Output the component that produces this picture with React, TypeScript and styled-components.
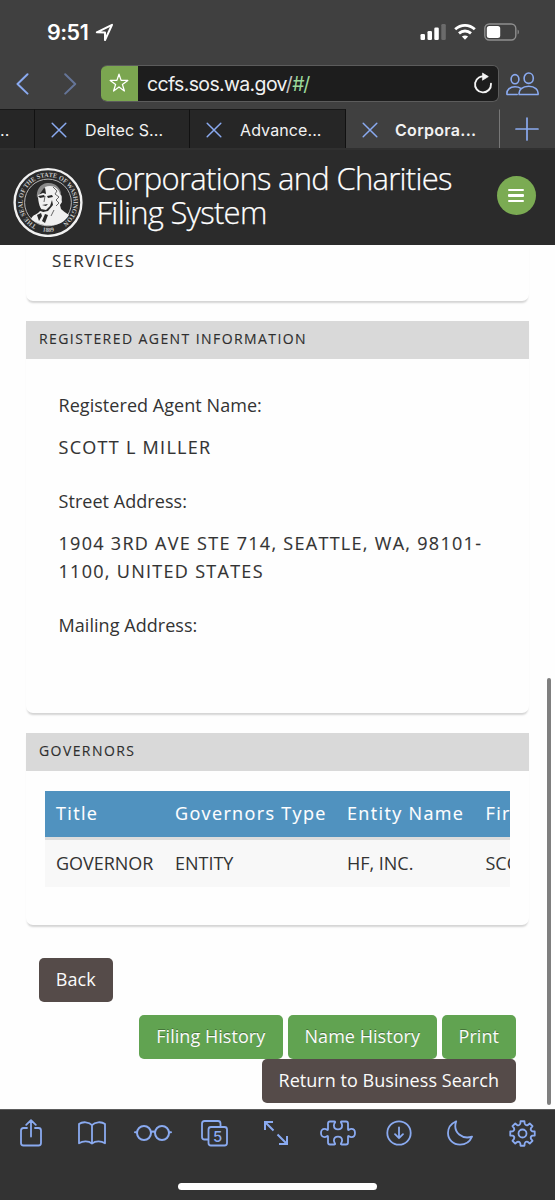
import React from 'react';
import styled, { createGlobalStyle } from 'styled-components';

const BLUE = '#8aaaf0';

const GlobalStyle = createGlobalStyle`
  *, *::before, *::after { box-sizing: border-box; }
  html, body { margin: 0; padding: 0; background: #fff; }
  body { font-family: 'Open Sans', 'Noto Sans', sans-serif; color: #333; overflow: hidden; }
`;

const Screen = styled.div`
  position: relative;
  width: 555px;
  height: 1200px;
  display: flex;
  flex-direction: column;
  overflow: hidden;
  background: #fefefe;
`;

/* ---------- browser chrome ---------- */

const StatusBar = styled.div`
  height: 64px;
  flex: none;
  display: flex;
  align-items: center;
  justify-content: space-between;
  padding: 0 35px 0 47px;
  background: #404040;
  color: #fff;
`;

const Clock = styled.div`
  display: flex;
  align-items: center;
  gap: 7px;
  font: 600 21.5px/26px Inter, sans-serif;
  letter-spacing: -0.5px;
`;

const StatusIcons = styled.div`
  display: flex;
  align-items: center;
  gap: 8px;
`;

const NavBar = styled.div`
  height: 45px;
  flex: none;
  display: flex;
  align-items: flex-start;
  background: #404040;
`;

const NavArrow = styled.div<{ $dim?: boolean; $pad: number }>`
  padding: 9px 0 0 ${p => p.$pad}px;
  width: ${p => (p.$dim ? 54 : 47)}px;
  flex: none;
  height: 36px;
  opacity: ${p => (p.$dim ? 0.5 : 1)};
  svg { display: block; }
`;

const AddressBar = styled.div`
  width: 398px;
  flex: none;
  height: 37px;
  margin-top: 0.5px;
  display: flex;
  align-items: center;
  border: 1px solid #5c5c5c;
  border-left: 0;
  border-radius: 6px;
  background: #1d1d1d;
  overflow: hidden;
`;

const Favorite = styled.div`
  width: 36.5px;
  height: 37px;
  display: flex;
  align-items: center;
  justify-content: center;
  background: #7ba650;
`;

const Url = styled.div`
  flex: 1;
  padding: 1px 0 0 9.5px;
  font: 400 19.5px/34px Inter, sans-serif;
  letter-spacing: -0.65px;
  color: #f1f1f1;
  span { color: #9bd89b; letter-spacing: -1.3px; }
  b { font-weight: 400; color: #c4c4c4; }
`;

const Reload = styled.div`
  padding-right: 4px;
  svg { display: block; }
`;

const People = styled.div`
  padding: 7.5px 0 0 7px;
  svg { display: block; }
`;

const Tabs = styled.div`
  height: 41px;
  flex: none;
  display: flex;
  background: #404040;
  border-bottom: 2px solid #303030;
`;

const Tab = styled.div<{ $w: number; $active?: boolean }>`
  width: ${p => p.$w}px;
  display: flex;
  align-items: center;
  padding: 1px 0 0 16px;
  gap: ${p => (p.$active ? 17 : 18)}px;
  border-top: 1px solid ${p => (p.$active ? '#404040' : '#181818')};
  border-right: 1px solid ${p => (p.$active ? '#777' : '#111')};
  background: ${p => (p.$active ? '#404040' : '#262626')};
  color: #f2f2f2;
  font: ${p => (p.$active ? 600 : 400)} 16px/20px Inter, sans-serif;
  letter-spacing: ${p => (p.$active ? 0.3 : 0.1)}px;
  white-space: nowrap;
`;

const CutTab = styled(Tab)`
  padding-left: 0;
`;

const NewTab = styled.div`
  flex: 1;
  display: flex;
  align-items: center;
  justify-content: center;
  padding: 1px 2px 0 0;
`;

/* ---------- site ---------- */

const SiteHeader = styled.header`
  height: 95px;
  flex: none;
  display: flex;
  align-items: flex-start;
  background: #2b2b2b;
  padding: 0 19.5px 0 12px;
`;

const SealBox = styled.div`
  padding-top: 15px;
  width: 84px;
  svg { display: block; }
`;

const SiteTitle = styled.h1`
  flex: 1;
  margin: 0;
  padding: 11px 0 0 0.5px;
  color: #fff;
  font-weight: 300;
  font-size: 31px;
  line-height: 34px;
  letter-spacing: -0.72px;
  -webkit-text-stroke: 0.25px #fff;
  white-space: nowrap;
`;

const MenuButton = styled.button`
  margin: 26px 0 0;
  padding: 0;
  width: 39px;
  height: 39px;
  border: 0;
  border-radius: 50%;
  background: #7bab53;
  display: flex;
  flex-direction: column;
  align-items: center;
  justify-content: center;
  gap: 2.7px;
`;

const MenuLine = styled.i`
  width: 16px;
  height: 2.7px;
  border-radius: 1px;
  background: #fff;
`;

const Page = styled.main`
  flex: 1;
  min-height: 0;
  padding: 0 26px;
`;

const Panel = styled.section<{ $h: number }>`
  height: ${p => p.$h}px;
  margin-bottom: 20px;
  border-radius: 0 0 7px 7px;
  background: #fefefe;
  box-shadow: 0 2.5px 2px -1px rgba(0, 0, 0, 0.17);
`;

const PanelTitle = styled.h2`
  margin: 0;
  height: 38px;
  padding-left: 13px;
  background: #d9d9d9;
  color: #2e2e2e;
  font-size: 14px;
  font-weight: 400;
  line-height: 35px;
  letter-spacing: 1.42px;
  -webkit-text-stroke: 0.12px #2e2e2e;
`;

const Continued = styled.div`
  padding: 2px 0 0 26px;
  font-size: 17px;
  line-height: 28px;
  letter-spacing: 1.2px;
  -webkit-text-stroke: 0.1px #333;
`;

const Fields = styled.dl`
  margin: 0;
  padding: 32.5px 30px 0 32.5px;
`;

const Label = styled.dt`
  font-size: 18px;
  line-height: 29px;
  letter-spacing: 0.05px;
`;

const Value = styled.dd`
  margin: 0;
  padding: 13px 0 25.6px;
  font-size: 18px;
  line-height: 28.3px;
  letter-spacing: 1.29px;
  -webkit-text-stroke: 0.12px #333;
  white-space: nowrap;
`;

const TableScroll = styled.div`
  margin: 20px 19px 0 19px;
  overflow: hidden;
`;

const Grid = styled.div<{ $head?: boolean }>`
  width: 620px;
  display: grid;
  grid-template-columns: 119px 172px 138.5px 1fr;
  padding-left: 11px;
  height: ${p => (p.$head ? 49 : 46.5)}px;
  line-height: ${p => (p.$head ? 45 : 46)}px;
  border-bottom: ${p => (p.$head ? '3px solid #dcdcdc' : '0')};
  background: ${p => (p.$head ? '#5092bf' : '#f8f8f8')};
  color: ${p => (p.$head ? '#fff' : '#333')};
  font-size: 18px;
  letter-spacing: ${p => (p.$head ? 1.35 : -0.02)}px;
  -webkit-text-stroke: ${p => (p.$head ? '0.12px #fff' : '0')};
  white-space: nowrap;
`;

const BackRow = styled.div`
  padding: 13px 13px 13px;
  display: flex;
`;

const Actions = styled.div`
  display: flex;
  flex-wrap: wrap;
  justify-content: flex-end;
  column-gap: 5px;
  padding-right: 13px;
`;

const Button = styled.button<{ $green?: boolean; $w: number }>`
  width: ${p => p.$w}px;
  height: 44px;
  padding: 0 0.5px 1px 0;
  border: 0;
  border-radius: 5px;
  background: ${p => (p.$green ? '#61a351' : '#554b49')};
  color: #fbfbfb;
  font: 400 18px/42px 'Open Sans', sans-serif;
  letter-spacing: 0.04px;
  text-shadow: ${p => (p.$green ? '0 -1px 0 rgba(0,0,0,0.3)' : 'none')};
  white-space: nowrap;
`;

const ScrollThumb = styled.div`
  position: absolute;
  left: 547px;
  top: 678px;
  width: 4px;
  height: 427px;
  border-radius: 2px;
  background: #7f7f7f;
`;

const BottomBar = styled.nav`
  height: 91px;
  flex: none;
  border-top: 1px solid #5d5d5d;
  background: #333;
  display: flex;
  flex-direction: column;
  align-items: center;
`;

const Tools = styled.div`
  width: 100%;
  height: 46px;
  display: grid;
  grid-template-columns: 61px 61.5px 61.5px 61px 61px 64px 58px 63px 62px;
  justify-items: center;
  align-items: center;
  svg { display: block; }
`;

const HomeIndicator = styled.div`
  margin-top: 27px;
  width: 199px;
  height: 7px;
  border-radius: 4px;
  background: #fff;
`;

/* ---------- drawings ---------- */

const stroke = {
  fill: 'none',
  stroke: BLUE,
  strokeWidth: 1.8,
  strokeLinecap: 'round' as const,
  strokeLinejoin: 'round' as const,
};

const CloseIcon = () => (
  <svg width="16" height="16" viewBox="0 0 16 16" {...stroke} strokeWidth={1.5}>
    <path d="M1.2 1.2l13.6 13.6M14.8 1.2L1.2 14.8" />
  </svg>
);

const Seal = () => (
  <svg width="72" height="72" viewBox="0 0 72 72">
    <defs>
      <path id="ring" d="M24.5 60.3 A25.5 25.5 0 1 1 47.5 60.3" />
      <path id="ringBottom" d="M27.5 65.5 Q36 68.4 44.5 65.5" />
    </defs>
    <circle cx="36" cy="37.5" r="33.4" fill="#2b2b2b" stroke="#f1f1f1" strokeWidth="2.4" />
    <circle cx="36" cy="37.5" r="23.4" fill="#292929" stroke="#b5b5b5" strokeWidth="1" />
    <text fill="#c8c8c8" fontFamily="Liberation Serif, serif" fontWeight="700" fontSize="6.6">
      <textPath href="#ring" textLength="132" lengthAdjust="spacingAndGlyphs">THE SEAL OF THE STATE OF WASHINGTON</textPath>
    </text>
    <text fill="#c8c8c8" fontFamily="Liberation Serif, serif" fontWeight="700" fontSize="6">
      <textPath href="#ringBottom" startOffset="3">1889</textPath>
    </text>
    <path fill="#8a8a8a" d="M25 33C24 25 28 19 35 18C43 17 49 23 49 29L40 28L32 23Z" />
    <path fill="#f0f0f0" d="M26 30L31 28L34 29L33 22C40 19 47 23 48 29C51 31 49 34 50 37L48 40L49 44C52 47 56 49 57 50C53 57 46 60.5 37 60.5C30 60.5 24 58 19 54C21 49 25 50 28 46L32 47C28 44 26 38 26 30Z" />
    <path fill="#292929" d="M26 31l6-1 1 2-5 1zM35 31l5-1 1 2-5 1zM30 40l6-1-2 2zM40 35l1 5-5 6-5 1-2-3 5 1 4-4zM25 50l4-2 1 3-3 5zM33 49l3 1-3 8-3-2z" />
    <path fill="none" stroke="#666" strokeWidth="1" d="M41 22l4 4-2 3 4 3-3 3 3 3-3 3M33 31l-1 6M42 45l-3 6" />
  </svg>
);

const gearPath = (() => {
  const pts: string[] = [];
  for (let i = 0; i < 8; i++) {
    const a = (i * Math.PI) / 4;
    const at = (r: number, d: number) =>
      `${(13.5 + r * Math.sin(a + d)).toFixed(2)} ${(13.5 - r * Math.cos(a + d)).toFixed(2)}`;
    pts.push(`${i ? 'L' : 'M'}${at(12.4, -0.16)}L${at(12.4, 0.16)}L${at(10, 0.22)}Q${at(8.2, 0.39)} ${at(10, 0.565)}`);
  }
  return pts.join('') + 'Z';
})();

const App = () => (
  <Screen>
    <GlobalStyle />
    <StatusBar>
      <Clock>
        9:51
        <svg width="19" height="19" viewBox="0 0 19 19" fill="none" stroke="#fff" strokeWidth="2" strokeLinejoin="round">
          <path d="M1.8 9.3L17 1.8L10 17V9.4Z" />
        </svg>
      </Clock>
      <StatusIcons>
        <svg width="26" height="18" viewBox="0 0 26 18" fill="#fff">
          <rect x="0.5" y="11" width="4.5" height="6" rx="1.3" />
          <rect x="7.5" y="8" width="4.5" height="9" rx="1.3" />
          <rect x="14.3" y="4.5" width="4.5" height="12.5" rx="1.3" />
          <rect x="21.3" y="1" width="4.5" height="16" rx="1.3" fill="#6b6b6b" />
        </svg>
        <svg width="22" height="18" viewBox="0 0 22 18" fill="none" stroke="#fff" strokeWidth="2.8">
          <path d="M1.2 6.3C6.8 1 15.2 1 20.8 6.3" />
          <path d="M5 10.4C8.5 7.2 13.5 7.2 17 10.4" />
          <path d="M7.9 13.6C9.7 12 12.3 12 14.1 13.6L11 16.8Z" fill="#fff" stroke="none" />
        </svg>
        <svg width="36" height="18" viewBox="0 0 36 18">
          <rect x="0.8" y="1" width="31" height="16" rx="4.5" fill="none" stroke="#8e8e8e" strokeWidth="1.4" />
          <rect x="2.8" y="3" width="13.4" height="12" rx="2.5" fill="#fff" />
          <path d="M33.6 6.5a3 3 0 010 5z" fill="#8e8e8e" />
        </svg>
      </StatusIcons>
    </StatusBar>

    <NavBar>
      <NavArrow $pad={16}>
        <svg width="14" height="22" viewBox="0 0 14 22" {...stroke} strokeWidth={2}>
          <path d="M11.5 1.2L1.5 11L11.5 20.6" />
        </svg>
      </NavArrow>
      <NavArrow $pad={17} $dim>
        <svg width="14" height="22" viewBox="0 0 14 22" {...stroke} strokeWidth={2}>
          <path d="M1.2 1.2L11.2 11L1.2 20.6" />
        </svg>
      </NavArrow>
      <AddressBar>
        <Favorite>
          <svg width="20" height="20" viewBox="0 0 20 20" fill="none" stroke="#fff" strokeWidth="1.3" strokeLinejoin="round">
            <path d="M10 1.2L12.1 7.4H18.8L13.4 11.4L15.4 18L10 14L4.6 18L6.6 11.4L1.2 7.4H7.9Z" />
          </svg>
        </Favorite>
        <Url>ccfs.sos.wa.gov<b>/</b><span>#/</span></Url>
        <Reload>
          <svg width="21" height="22" viewBox="0 0 21 22" fill="none" stroke="#f4f4f4" strokeWidth="1.9" strokeLinecap="round">
            <path d="M18 11.8A8 8 0 1 1 12.5 4.8" />
            <path d="M9.8 1.3L15.3 4.6L9.8 8Z" fill="#f4f4f4" strokeWidth="0.8" strokeLinejoin="round" />
          </svg>
        </Reload>
      </AddressBar>
      <People>
        <svg width="33" height="24" viewBox="0 0 33 24" {...stroke} strokeWidth={1.6}>
          <ellipse cx="9" cy="7.2" rx="3.9" ry="4.6" />
          <ellipse cx="22.7" cy="6.2" rx="4.6" ry="5.2" />
          <path d="M11.2 22.5H1C0.3 17.8 4 14.7 9 14.7C11.2 14.7 13.2 15.2 14.7 16.3" />
          <path d="M13.2 22.5C12.3 17.8 16.5 14.3 22.7 14.3C28.8 14.3 32.8 17.8 32 22.5Z" />
        </svg>
      </People>
    </NavBar>

    <Tabs>
      <CutTab $w={35}>..</CutTab>
      <Tab $w={155}><CloseIcon />Deltec S...</Tab>
      <Tab $w={156}><CloseIcon />Advance...</Tab>
      <Tab $w={154} $active><CloseIcon />Corpora...</Tab>
      <NewTab>
        <svg width="24" height="24" viewBox="0 0 24 24" {...stroke} strokeWidth={1.7}>
          <path d="M12 1v22M1 12h22" />
        </svg>
      </NewTab>
    </Tabs>

    <SiteHeader>
      <SealBox><Seal /></SealBox>
      <SiteTitle>Corporations and Charities<br />Filing System</SiteTitle>
      <MenuButton aria-label="Menu">
        <MenuLine /><MenuLine /><MenuLine />
      </MenuButton>
    </SiteHeader>

    <Page>
      <Panel $h={55.5}>
        <Continued>SERVICES</Continued>
      </Panel>
      <Panel $h={392.5}>
        <PanelTitle>REGISTERED AGENT INFORMATION</PanelTitle>
        <Fields>
          <Label>Registered Agent Name:</Label>
          <Value>SCOTT L MILLER</Value>
          <Label>Street Address:</Label>
          <Value>1904 3RD AVE STE 714, SEATTLE, WA, 98101-<br />1100, UNITED STATES</Value>
          <Label>Mailing Address:</Label>
        </Fields>
      </Panel>
      <Panel $h={191.5}>
        <PanelTitle>GOVERNORS</PanelTitle>
        <TableScroll>
          <Grid $head>
            <span>Title</span><span>Governors Type</span><span>Entity Name</span><span>First Name</span>
          </Grid>
          <Grid>
            <span>GOVERNOR</span><span>ENTITY</span><span>HF, INC.</span><span>SCOTT</span>
          </Grid>
        </TableScroll>
      </Panel>
      <BackRow><Button $w={74}>Back</Button></BackRow>
      <Actions>
        <Button $green $w={144}>Filing History</Button>
        <Button $green $w={149}>Name History</Button>
        <Button $green $w={74}>Print</Button>
        <Button $w={254}>Return to Business Search</Button>
      </Actions>
    </Page>

    <ScrollThumb />

    <BottomBar>
      <Tools>
        <svg width="22" height="28" viewBox="0 0 22 28" {...stroke}>
          <path d="M7 9H3.5Q1 9 1 11.5V24Q1 26.5 3.5 26.5H18.5Q21 26.5 21 24V11.5Q21 9 18.5 9H15M11 17.5V1.2M6.2 5.8L11 1.2L15.8 5.8" />
        </svg>
        <svg width="28" height="24" viewBox="0 0 28 24" {...stroke}>
          <path d="M14 4.2C11 .7 4.5.4 1 3V22.3C5 19.8 10.5 19.8 14 22.6C17.5 19.8 23 19.8 27 22.3V3C23.5.4 17 .7 14 4.2ZM14 4.2V22.6" />
        </svg>
        <svg width="38" height="18" viewBox="0 0 38 18" {...stroke} strokeWidth={2}>
          <circle cx="10" cy="9" r="7" /><circle cx="28" cy="9" r="7" />
          <path d="M17 8.2Q19 7 21 8.2M1 8.2H3M35 8.2H37" />
        </svg>
        <svg width="27" height="27" viewBox="0 0 27 27" {...stroke}>
          <path d="M7 19.5H3.5Q1 19.5 1 17V3.5Q1 1 3.5 1H17Q19.5 1 19.5 3.5V6.5" />
          <rect x="7.5" y="7" width="18.5" height="18.5" rx="2.5" />
          <text x="16.7" y="21.5" textAnchor="middle" fill={BLUE} stroke="none" fontFamily="Inter, sans-serif" fontWeight="500" fontSize="15">5</text>
        </svg>
        <svg width="26" height="26" viewBox="0 0 26 26" {...stroke} strokeLinecap="butt" strokeLinejoin="miter" strokeWidth={2}>
          <path d="M2 10V2H10M2 2L10.5 10.5M24 16V24H16M24 24L14.5 14.5" />
        </svg>
        <svg width="36" height="26" viewBox="0 0 36 26" {...stroke}>
          <path d="M10 1.5H14.5Q15.5 1.5 15 2.6C14.2 3.8 13.9 4.5 13.9 5.5C13.9 8 15.6 9.3 18 9.3S22.1 8 22.1 5.5C22.1 4.5 21.8 3.8 21 2.6Q20.5 1.5 21.5 1.5H26Q28 1.5 28 3.5V9.3Q28 10.4 29 9.8C30 9 30.6 8.9 31.4 8.9C33.6 8.9 35 10.6 35 13S33.6 17.1 31.4 17.1C30.6 17.1 30 17 29 16.2Q28 15.6 28 16.7V22.5Q28 24.5 26 24.5H21.5Q20.5 24.5 21 23.4C21.8 22.2 22.1 21.5 22.1 20.5C22.1 18 20.4 16.7 18 16.7S13.9 18 13.9 20.5C13.9 21.5 14.2 22.2 15 23.4Q15.5 24.5 14.5 24.5H10Q8 24.5 8 22.5V16.7Q8 15.6 7 16.2C6 17 5.4 17.1 4.6 17.1C2.4 17.1 1 15.4 1 13S2.4 8.9 4.6 8.9C5.4 8.9 6 9 7 9.8Q8 10.4 8 9.3V3.5Q8 1.5 10 1.5Z" />
        </svg>
        <svg width="26" height="26" viewBox="0 0 26 26" {...stroke}>
          <circle cx="13" cy="13" r="11.7" />
          <path d="M13 7.3V18M9 14.2L13 18.2L17 14.2" />
        </svg>
        <svg width="26" height="26" viewBox="0 0 26 26" {...stroke}>
          <path d="M9.2 1.3C3.8 3.8 1 8.4 1 13.1C1 19.8 6.3 24.7 13 24.7C18.3 24.7 22.8 21.7 25 16.6C16 19.7 5.2 13 9.2 1.3Z" />
        </svg>
        <svg width="27" height="27" viewBox="0 0 27 27" {...stroke}>
          <path d={gearPath} />
          <circle cx="13.5" cy="13.5" r="4" />
        </svg>
      </Tools>
      <HomeIndicator />
    </BottomBar>
  </Screen>
);

export default App;
